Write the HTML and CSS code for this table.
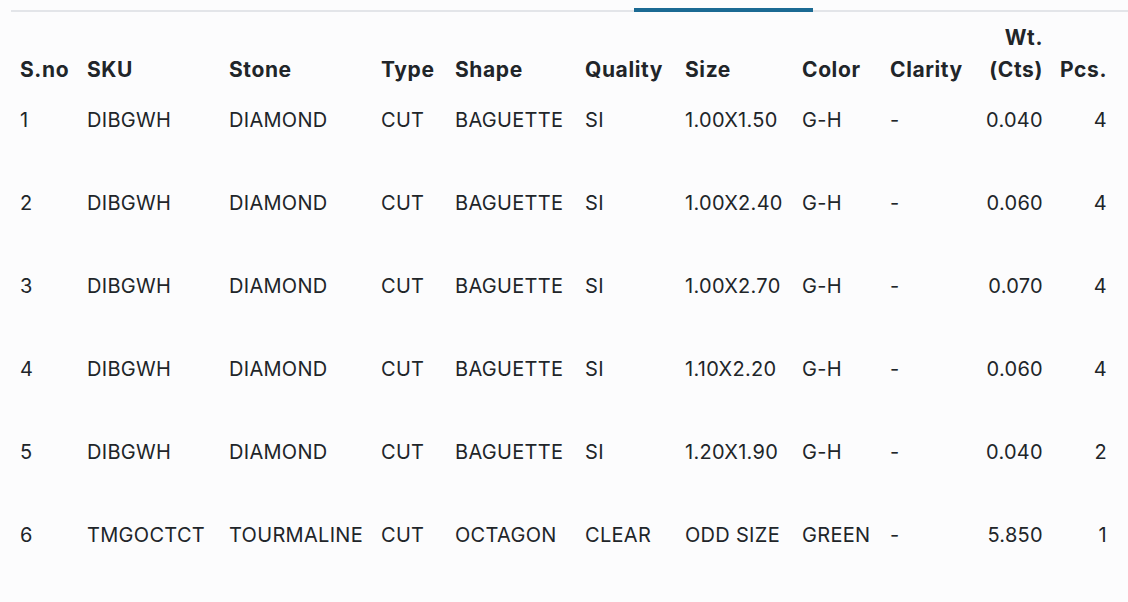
FILE: index.html
```html
<!DOCTYPE html>
<html lang="en">
<head>
<meta charset="utf-8">
<title>Stones</title>
<link rel="stylesheet" href="styles.css">
</head>
<body>
<div class="page">
  <div class="tabs">
    <div class="tab tab-active"></div>
  </div>
  <table class="stones">
    <colgroup>
      <col class="c-sno"><col class="c-sku"><col class="c-stone"><col class="c-type"><col class="c-shape"><col class="c-quality"><col class="c-size"><col class="c-color"><col class="c-clarity"><col class="c-wt"><col class="c-pcs">
    </colgroup>
    <thead>
      <tr>
        <th>S.no</th><th>SKU</th><th>Stone</th><th>Type</th><th>Shape</th><th>Quality</th><th>Size</th><th>Color</th><th>Clarity</th><th class="num">Wt.<br>(Cts)</th><th class="num">Pcs.</th>
      </tr>
    </thead>
    <tbody>
      <tr><td>1</td><td>DIBGWH</td><td>DIAMOND</td><td>CUT</td><td>BAGUETTE</td><td>SI</td><td>1.00X1.50</td><td>G-H</td><td>-</td><td class="num">0.040</td><td class="num">4</td></tr>
      <tr><td>2</td><td>DIBGWH</td><td>DIAMOND</td><td>CUT</td><td>BAGUETTE</td><td>SI</td><td>1.00X2.40</td><td>G-H</td><td>-</td><td class="num">0.060</td><td class="num">4</td></tr>
      <tr><td>3</td><td>DIBGWH</td><td>DIAMOND</td><td>CUT</td><td>BAGUETTE</td><td>SI</td><td>1.00X2.70</td><td>G-H</td><td>-</td><td class="num">0.070</td><td class="num">4</td></tr>
      <tr><td>4</td><td>DIBGWH</td><td>DIAMOND</td><td>CUT</td><td>BAGUETTE</td><td>SI</td><td>1.10X2.20</td><td>G-H</td><td>-</td><td class="num">0.060</td><td class="num">4</td></tr>
      <tr><td>5</td><td>DIBGWH</td><td>DIAMOND</td><td>CUT</td><td>BAGUETTE</td><td>SI</td><td>1.20X1.90</td><td>G-H</td><td>-</td><td class="num">0.040</td><td class="num">2</td></tr>
      <tr><td>6</td><td>TMGOCTCT</td><td>TOURMALINE</td><td>CUT</td><td>OCTAGON</td><td>CLEAR</td><td>ODD SIZE</td><td>GREEN</td><td>-</td><td class="num">5.850</td><td class="num">1</td></tr>
    </tbody>
  </table>
</div>
</body>
</html>
```
FILE: styles.css
```css
* { box-sizing: border-box; }
html, body {
  margin: 0;
  padding: 0;
  background: #fcfcfd;
}
body {
  font-family: Inter, "Noto Sans", "Liberation Sans", sans-serif;
  color: #212529;
  overflow: hidden;
}
.page {
  width: 1128px;
  height: 602px;
}
.tabs {
  display: flex;
  align-items: flex-end;
  height: 12px;
  margin-left: 11px;
  border-bottom: 2px solid #e3e5e9;
}
.tab {
  width: 179px;
  height: 4px;
  margin-bottom: -2px;
}
.tab-active {
  margin-left: 623px;
  background: #1b6a93;
}
.stones {
  margin-top: 10px;
  margin-left: 20px;
  border-collapse: collapse;
  table-layout: fixed;
  width: 1087px;
}
.c-sno { width: 67px; }
.c-sku { width: 142px; }
.c-stone { width: 152px; }
.c-type { width: 74px; }
.c-shape { width: 130px; }
.c-quality { width: 100px; }
.c-size { width: 117px; }
.c-color { width: 88px; }
.c-clarity { width: 85px; }
.c-wt { width: 68px; }
.c-pcs { width: 64px; }
.stones th {
  font-size: 21px;
  font-weight: 700;
  letter-spacing: 0.6px;
  line-height: 32px;
  text-align: left;
  vertical-align: bottom;
  padding: 0;
  white-space: nowrap;
}
.stones td {
  font-size: 20px;
  font-weight: 400;
  letter-spacing: 0.3px;
  line-height: 32px;
  height: 83px;
  padding: 18px 0 0 0;
  vertical-align: top;
  white-space: nowrap;
}
.stones .num { text-align: right; }
```
